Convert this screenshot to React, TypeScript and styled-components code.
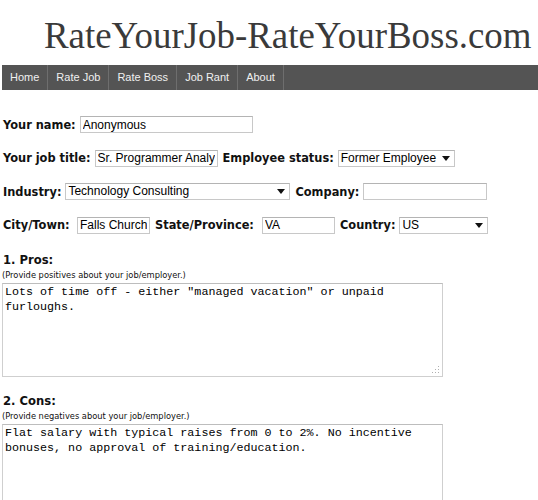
import React from "react";
import styled, { createGlobalStyle } from "styled-components";

const GlobalStyle = createGlobalStyle`
  body {
    margin: 0;
    background: #fff;
  }
`;

const Page = styled.div`
  padding-left: 2px;
  width: 536px;
  overflow: hidden;
`;

const SiteTitle = styled.h1`
  margin: 0;
  padding: 15px 0 8px 42px;
  font-family: "Liberation Serif", serif;
  font-weight: normal;
  font-size: 36.9px;
  line-height: 42px;
  color: #3a3a3a;
  white-space: nowrap;
`;

const NavBar = styled.nav`
  display: flex;
  height: 25px;
  background: #545454;
`;

const NavItem = styled.a`
  padding: 0 8px;
  line-height: 25px;
  border-right: 1px solid #6e6e6e;
  font-family: "Liberation Sans", Arial, sans-serif;
  font-size: 11px;
  color: #f0f0f0;
  text-decoration: none;
`;

const Form = styled.form`
  padding-top: 18px;
`;

const Row = styled.div`
  display: flex;
  align-items: center;
  height: 33.5px;
  padding-left: 1px;
`;

const Label = styled.label<{ $w?: number }>`
  min-width: ${(p) => (p.$w ? `${p.$w}px` : "0")};
  margin-right: 4px;
  font-family: "DejaVu Sans", Verdana, sans-serif;
  font-weight: bold;
  font-size: 11.4px;
  color: #111;
  white-space: nowrap;
`;

const TextInput = styled.input<{ $w: number }>`
  box-sizing: border-box;
  width: ${(p) => p.$w}px;
  height: 17px;
  margin: 0 5px 0 0;
  padding: 0 2px;
  border: 1px solid #c8c8c8;
  border-top-color: #b4b4b4;
  font-family: "Liberation Sans", Arial, sans-serif;
  font-size: 12px;
  color: #000;
  background: #fff;
  outline: none;
`;

const SelectWrap = styled.span<{ $w: number }>`
  position: relative;
  display: inline-block;
  width: ${(p) => p.$w}px;
  height: 17px;
  margin-right: 5px;
`;

const Select = styled.select`
  display: block;
  box-sizing: border-box;
  width: 100%;
  height: 17px;
  margin: 0;
  padding: 0 14px 1px 2px;
  appearance: none;
  border: 1px solid #c8c8c8;
  border-top-color: #b4b4b4;
  border-radius: 0;
  font-family: "Liberation Sans", Arial, sans-serif;
  font-size: 12px;
  line-height: 14px;
  color: #000;
  background: #fff;
  outline: none;
`;

const Arrow = styled.svg`
  position: absolute;
  right: 5px;
  top: 6px;
  pointer-events: none;
`;

const Heading = styled.div<{ $top: number }>`
  margin-top: ${(p) => p.$top}px;
  padding-left: 1px;
  font-family: "DejaVu Sans", Verdana, sans-serif;
  font-weight: bold;
  font-size: 11.6px;
  line-height: 16px;
  color: #111;
`;

const Note = styled.div`
  margin-top: 1px;
  font-family: "DejaVu Sans", Verdana, sans-serif;
  font-size: 8.3px;
  line-height: 12px;
  color: #111;
`;

const AreaWrap = styled.div`
  position: relative;
  width: 441px;
  margin-top: 2px;
`;

const TextArea = styled.textarea`
  display: block;
  box-sizing: border-box;
  width: 441px;
  height: 94px;
  margin: 0;
  padding: 1px 2px;
  resize: none;
  border: 1px solid #cfcfcf;
  border-top-color: #bdbdbd;
  font-family: "Liberation Mono", "Courier New", monospace;
  font-size: 11.7px;
  line-height: 14.5px;
  color: #000;
  background: #fff;
  outline: none;
`;

const Grip = styled.svg`
  position: absolute;
  right: 3px;
  bottom: 3px;
`;

function DropArrow() {
  return (
    <Arrow width="8" height="5" viewBox="0 0 8 5">
      <path d="M0 0h8L4 5z" fill="#111" />
    </Arrow>
  );
}

function Dropdown({ width, value }: { width: number; value: string }) {
  return (
    <SelectWrap $w={width}>
      <Select defaultValue={value}>
        <option>{value}</option>
      </Select>
      <DropArrow />
    </SelectWrap>
  );
}

function Comment({ value, grip }: { value: string; grip?: boolean }) {
  return (
    <AreaWrap>
      <TextArea defaultValue={value} readOnly />
      {grip && (
        <Grip width="9" height="9" viewBox="0 0 9 9">
          <g fill="#b0b0b0">
            <rect x="7" y="1" width="1" height="1" />
            <rect x="7" y="4" width="1" height="1" />
            <rect x="4" y="4" width="1" height="1" />
            <rect x="7" y="7" width="1" height="1" />
            <rect x="4" y="7" width="1" height="1" />
            <rect x="1" y="7" width="1" height="1" />
          </g>
        </Grip>
      )}
    </AreaWrap>
  );
}

const navLinks = ["Home", "Rate Job", "Rate Boss", "Job Rant", "About"];

export default function App() {
  return (
    <Page>
      <GlobalStyle />
      <SiteTitle>RateYourJob-RateYourBoss.com</SiteTitle>
      <NavBar>
        {navLinks.map((l) => (
          <NavItem key={l} href="#">
            {l}
          </NavItem>
        ))}
      </NavBar>
      <Form onSubmit={(e) => e.preventDefault()}>
        <Row>
          <Label>Your name:</Label>
          <TextInput $w={173} defaultValue="Anonymous" />
        </Row>
        <Row>
          <Label>Your job title:</Label>
          <TextInput $w={123} defaultValue="Sr. Programmer Analyst" />
          <Label>Employee status:</Label>
          <Dropdown width={117} value="Former Employee" />
        </Row>
        <Row>
          <Label>Industry:</Label>
          <Dropdown width={225} value="Technology Consulting" />
          <Label>Company:</Label>
          <TextInput $w={124} defaultValue="" />
        </Row>
        <Row>
          <Label $w={70}>City/Town:</Label>
          <TextInput $w={73} defaultValue="Falls Church" />
          <Label $w={103}>State/Province:</Label>
          <TextInput $w={73} defaultValue="VA" />
          <Label $w={55}>Country:</Label>
          <Dropdown width={89} value="US" />
        </Row>

        <Heading $top={10}>1. Pros:</Heading>
        <Note>(Provide positives about your job/employer.)</Note>
        <Comment
          grip
          value={'Lots of time off - either "managed vacation" or unpaid furloughs.'}
        />

        <Heading $top={16}>2. Cons:</Heading>
        <Note>(Provide negatives about your job/employer.)</Note>
        <Comment value="Flat salary with typical raises from 0 to 2%. No incentive bonuses, no approval of training/education." />
      </Form>
    </Page>
  );
}
